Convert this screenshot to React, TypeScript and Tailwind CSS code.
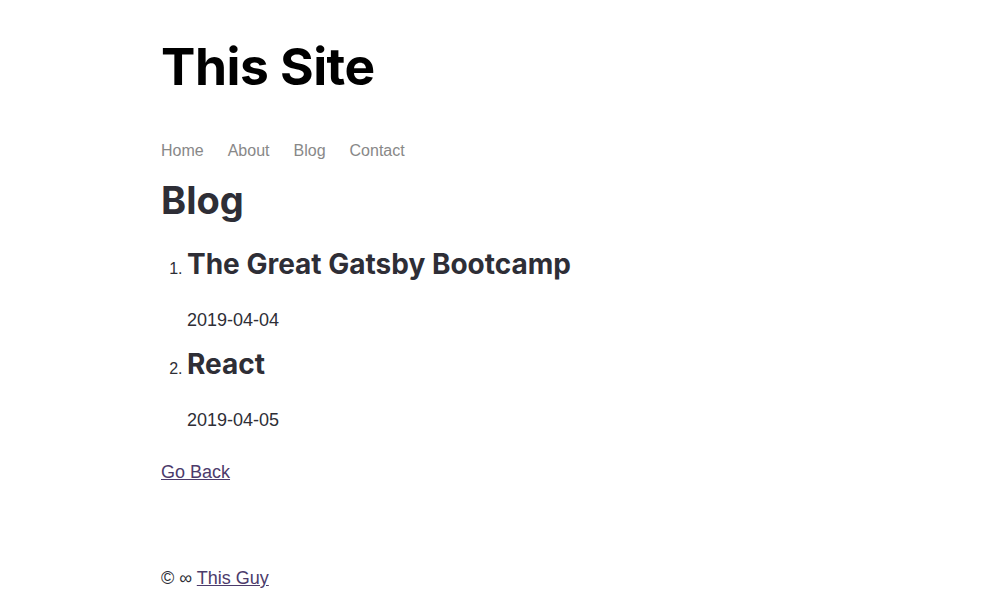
import React from "react";

export default function App() {
  const heading = { fontFamily: "Inter, 'Liberation Sans', sans-serif" };
  const body = { fontFamily: "'Liberation Sans', Arial, sans-serif" };
  return (
    <div className="min-h-screen bg-white" style={body}>
      <div className="mx-auto w-[667px] pt-[30px] text-[#2e2e36]">
        <header>
          <h1 className="text-[51.5px] leading-[72px] font-bold text-black tracking-[-0.5px]" style={heading}>
            This Site
          </h1>
          <nav className="mt-[37px] flex gap-6 text-[16px] leading-[24px] text-[#888888]">
            <span>Home</span>
            <span>About</span>
            <span>Blog</span>
            <span>Contact</span>
          </nav>
        </header>
        <main>
          <h2 className="mt-[13px] text-[38px] leading-[48px] font-bold text-[#2e2e36]" style={heading}>
            Blog
          </h2>
          <ol className="mt-[22px] list-decimal pl-[26px]">
            <li className="marker:text-[16px]">
              <h3 className="text-[28px] leading-[36px] font-bold" style={heading}>
                The Great Gatsby Bootcamp
              </h3>
              <p className="mt-[26px] text-[18px] leading-[24px]">2019-04-04</p>
            </li>
            <li className="mt-[14px] marker:text-[16px]">
              <h3 className="text-[28px] leading-[36px] font-bold" style={heading}>
                React
              </h3>
              <p className="mt-[26px] text-[18px] leading-[24px]">2019-04-05</p>
            </li>
          </ol>
          <a href="#" className="mt-[28px] inline-block text-[18px] leading-[24px] text-[#4c3b6b] underline">
            Go Back
          </a>
        </main>
        <footer className="mt-[81px] text-[18px] leading-[24px]">
          © ∞ <a href="#" className="text-[#4c3b6b] underline">This Guy</a>
        </footer>
      </div>
    </div>
  );
}
